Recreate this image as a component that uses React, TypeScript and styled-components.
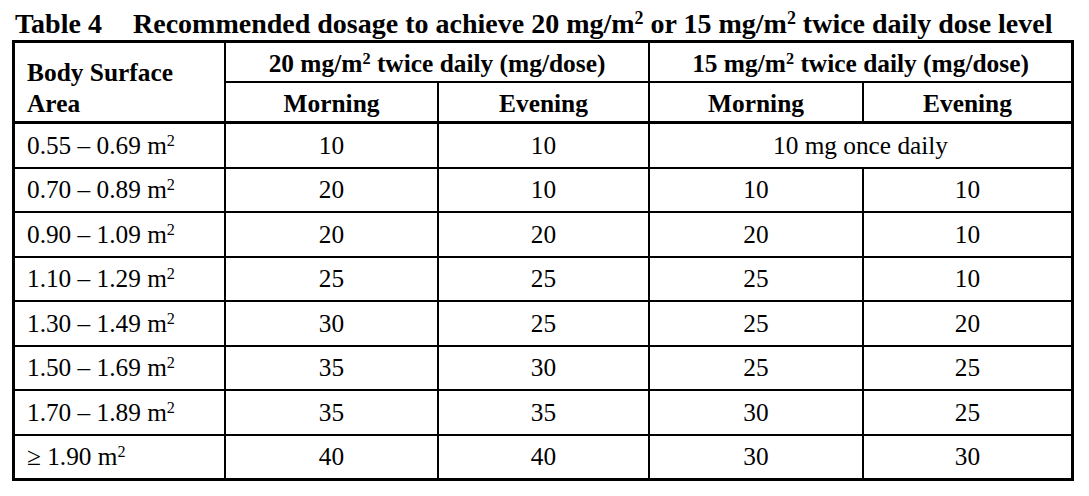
import React from "react";
import styled, { createGlobalStyle } from "styled-components";

const Global = createGlobalStyle`
  html, body { margin: 0; padding: 0; background: #fff; }
  body { font-family: "Liberation Serif", "Times New Roman", serif; color: #000; }
`;

const Page = styled.div`
  width: 1089px;
  height: 496px;
  box-sizing: border-box;
  padding: 7px 12px 0 12px;
  background: #fff;
`;

const Title = styled.div`
  display: flex;
  align-items: baseline;
  height: 33px;
  line-height: 33px;
  padding-left: 3px;
  font-size: 28px;
  font-weight: 700;
  white-space: nowrap;
`;

const TitleLabel = styled.span`
  width: 118px;
  flex: none;
`;

const Sup = styled.sup`
  font-size: 0.64em;
  line-height: 0;
  vertical-align: 0.5em;
`;

const Grid = styled.div`
  display: grid;
  width: 1062px;
  box-sizing: border-box;
  background: #000;
  padding: 3px;
  column-gap: 2px;
  row-gap: 2px;
  grid-template-columns: 209px 211px 209px 212px 207px;
  grid-template-rows: 38px 39px repeat(8, 42.5px);
`;

const Cell = styled.div<{ $span?: number; $rows?: number; $left?: boolean; $thick?: boolean }>`
  background: #fff;
  display: flex;
  align-items: center;
  box-sizing: border-box;
  justify-content: ${(p) => (p.$left ? "flex-start" : "center")};
  padding-left: ${(p) => (p.$left ? "12px" : "0")};
  grid-column: span ${(p) => p.$span ?? 1};
  grid-row: span ${(p) => p.$rows ?? 1};
  margin-bottom: ${(p) => (p.$thick ? "1px" : "0")};
  font-size: 25.3px;
  white-space: nowrap;
`;

const Text = styled.span`
  display: block;
`;

const HeadCell = styled(Cell)`
  font-weight: 700;
  font-size: 25.4px;
  padding-top: 3px;
`;

const StackedHead = styled(HeadCell)`
  flex-direction: column;
  align-items: flex-start;
  justify-content: center;
  line-height: 31px;
  padding-top: 11px;
`;

const M2 = () => (
  <>
    m<Sup>2</Sup>
  </>
);

type Row = { area: React.ReactNode; vals: string[]; once?: string };

const rows: Row[] = [
  { area: <>0.55 – 0.69 <M2 /></>, vals: ["10", "10"], once: "10 mg once daily" },
  { area: <>0.70 – 0.89 <M2 /></>, vals: ["20", "10", "10", "10"] },
  { area: <>0.90 – 1.09 <M2 /></>, vals: ["20", "20", "20", "10"] },
  { area: <>1.10 – 1.29 <M2 /></>, vals: ["25", "25", "25", "10"] },
  { area: <>1.30 – 1.49 <M2 /></>, vals: ["30", "25", "25", "20"] },
  { area: <>1.50 – 1.69 <M2 /></>, vals: ["35", "30", "25", "25"] },
  { area: <>1.70 – 1.89 <M2 /></>, vals: ["35", "35", "30", "25"] },
  { area: <>≥ 1.90 <M2 /></>, vals: ["40", "40", "30", "30"] },
];

export default function App() {
  return (
    <Page>
      <Global />
      <Title>
        <TitleLabel>Table 4</TitleLabel>
        <span>
          Recommended dosage to achieve 20 mg/m<Sup>2</Sup> or 15 mg/m<Sup>2</Sup> twice daily dose level
        </span>
      </Title>
      <Grid>
        <StackedHead $rows={2} $left $thick>
          <Text>Body Surface</Text>
          <Text>Area</Text>
        </StackedHead>
        <HeadCell $span={2}>
          <Text>
            20 mg/m<Sup>2</Sup> twice daily (mg/dose)
          </Text>
        </HeadCell>
        <HeadCell $span={2}>
          <Text>
            15 mg/m<Sup>2</Sup> twice daily (mg/dose)
          </Text>
        </HeadCell>
        <HeadCell $thick>
          <Text>Morning</Text>
        </HeadCell>
        <HeadCell $thick>
          <Text>Evening</Text>
        </HeadCell>
        <HeadCell $thick>
          <Text>Morning</Text>
        </HeadCell>
        <HeadCell $thick>
          <Text>Evening</Text>
        </HeadCell>
        {rows.map((r, i) => (
          <React.Fragment key={i}>
            <Cell $left>
              <Text>{r.area}</Text>
            </Cell>
            {r.vals.map((v, j) => (
              <Cell key={j}>
                <Text>{v}</Text>
              </Cell>
            ))}
            {r.once && (
              <Cell $span={2}>
                <Text>{r.once}</Text>
              </Cell>
            )}
          </React.Fragment>
        ))}
      </Grid>
    </Page>
  );
}
